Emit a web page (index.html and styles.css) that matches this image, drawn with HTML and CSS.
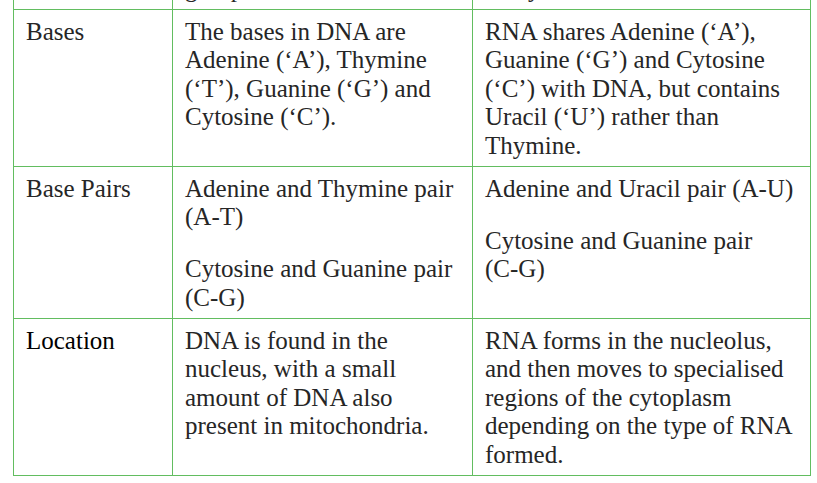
FILE: index.html
```html
<!DOCTYPE html>
<html lang="en">
<head>
<meta charset="utf-8">
<title>DNA vs RNA</title>
<link rel="stylesheet" href="styles.css">
</head>
<body>
<table class="compare">
  <colgroup>
    <col class="c-label">
    <col class="c-dna">
    <col class="c-rna">
  </colgroup>
  <tr>
    <td></td>
    <td><p>group</p></td>
    <td><p>every</p></td>
  </tr>
  <tr>
    <td><p>Bases</p></td>
    <td><p>The bases in DNA are Adenine (‘A’), Thymine (‘T’), Guanine (‘G’) and Cytosine (‘C’).</p></td>
    <td><p>RNA shares Adenine (‘A’), Guanine (‘G’) and Cytosine (‘C’) with DNA, but contains Uracil (‘U’) rather than Thymine.</p></td>
  </tr>
  <tr>
    <td><p>Base Pairs</p></td>
    <td><p>Adenine and Thymine pair <span class="nw">(A-T)</span></p><p>Cytosine and Guanine pair <span class="nw">(C-G)</span></p></td>
    <td><p>Adenine and Uracil pair <span class="nw">(A-U)</span></p><p>Cytosine and Guanine pair <span class="nw">(C-G)</span></p></td>
  </tr>
  <tr>
    <td><p class="dark">Location</p></td>
    <td><p>DNA is found in the nucleus, with a small amount of DNA also present in mitochondria.</p></td>
    <td><p>RNA forms in the nucleolus, and then moves to specialised regions of the cytoplasm depending on the type of RNA formed.</p></td>
  </tr>
</table>
</body>
</html>
```
FILE: styles.css
```css
html, body {
  margin: 0;
  padding: 0;
  background: #ffffff;
}
body {
  font-family: "Liberation Serif", "Times New Roman", serif;
  font-size: 25px;
  line-height: 28.5px;
  color: #262626;
  overflow: hidden;
}
.compare {
  border-collapse: collapse;
  table-layout: fixed;
  width: 797px;
  margin: -34px 0 0 13px;
}
.c-label { width: 159px; }
.c-dna { width: 300px; }
.c-rna { width: 338px; }
.compare td {
  border: 1.5px solid #62bd60;
  vertical-align: top;
  padding: 7.7px 12px 5.9px 12px;
}
.compare p {
  margin: 0;
}
.compare p + p {
  margin-top: 23.5px;
}
.nw {
  white-space: nowrap;
}
.dark {
  color: #000000;
}
```
